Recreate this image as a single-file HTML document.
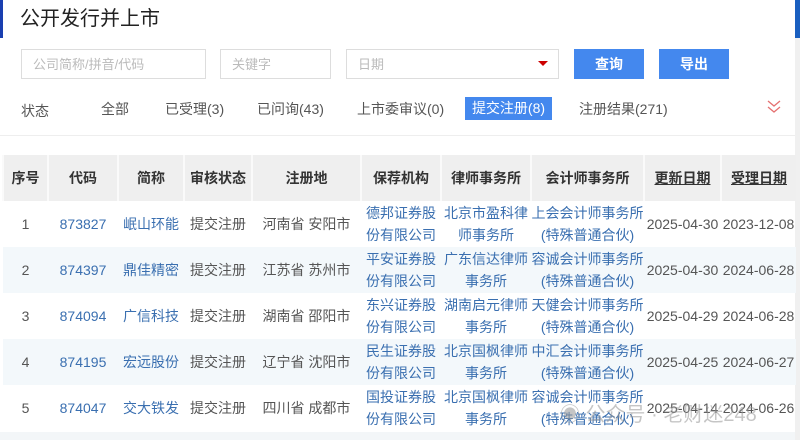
<!DOCTYPE html>
<html><head><meta charset="utf-8"><style>
*{margin:0;padding:0;box-sizing:border-box}
body{width:800px;height:440px;overflow:hidden;background:#fff;font-family:"Liberation Sans","Noto Sans CJK SC",sans-serif;color:#555;position:relative}
.abs{position:absolute}
.inp{position:absolute;top:49px;height:30px;border:1px solid #ddd;font-size:13px;color:#bbb;padding:7px 0 0 11px;line-height:15px}
.btn{position:absolute;top:49px;height:30px;width:70px;background:#4488ee;color:#fff;font-weight:bold;font-size:14px;text-align:center;line-height:30px}
.st{position:absolute;top:100px;font-size:14px;color:#555;line-height:18px}
table{position:absolute;left:2px;top:155px;border-collapse:collapse;table-layout:fixed;width:793px}
td,th{text-align:center;font-size:14px;line-height:22px;padding:0}
th{background:#efefef;height:46px;color:#333;border-left:2px solid #fafafa}
td{height:46px}
tr.a td{background:#f3f8fb}
.l{color:#3a6fb0}
</style></head><body>
<div class="abs" style="left:0;top:0;width:3px;height:38px;background:#1a3fb0"></div>
<div class="abs" style="left:795px;top:0;width:5px;height:38px;background:#1a5fc0"></div>
<div class="abs" style="left:795px;top:38px;width:5px;height:402px;background:#f0f0f0"></div>
<div class="abs" style="left:20px;top:5px;font-size:20px;color:#222;line-height:28px">公开发行并上市</div>
<div class="inp" style="left:21px;width:185px">公司简称/拼音/代码</div>
<div class="inp" style="left:220px;width:111px">关键字</div>
<div class="inp" style="left:346px;width:213px">日期</div>
<div class="abs" style="left:538px;top:61px;width:0;height:0;border-left:5px solid transparent;border-right:5px solid transparent;border-top:5px solid #c00"></div>
<div class="btn" style="left:574px">查询</div>
<div class="btn" style="left:659px">导出</div>
<div class="st" style="left:21px;top:102px">状态</div>
<div class="st" style="left:101px">全部</div>
<div class="st" style="left:165px">已受理(3)</div>
<div class="st" style="left:257px">已问询(43)</div>
<div class="st" style="left:357px">上市委审议(0)</div>
<div class="abs" style="left:465px;top:97px;width:87px;height:23px;background:#4488ee;color:#fff;font-size:14px;text-align:center;line-height:23px">提交注册(8)</div>
<div class="st" style="left:579px">注册结果(271)</div>
<svg class="abs" style="left:766px;top:99px" width="16" height="16"><path d="M2 2l6 5l6-5M2 8l6 5l6-5" fill="none" stroke="#e57070" stroke-width="1.3"/></svg>
<div class="abs" style="left:0;top:135px;width:795px;height:1px;background:#eee"></div>
<table>
<colgroup><col style="width:45px"><col style="width:70px"><col style="width:66px"><col style="width:68px"><col style="width:109px"><col style="width:80px"><col style="width:90px"><col style="width:113px"><col style="width:77px"><col style="width:75px"></colgroup>
<tr><th>序号</th><th>代码</th><th>简称</th><th>审核状态</th><th>注册地</th><th>保荐机构</th><th>律师事务所</th><th>会计师事务所</th><th><u>更新日期</u></th><th><u>受理日期</u></th></tr>
<tr><td>1</td><td class="l">873827</td><td class="l">岷山环能</td><td>提交注册</td><td>河南省 安阳市</td><td class="l">德邦证券股<br>份有限公司</td><td class="l">北京市盈科律<br>师事务所</td><td class="l">上会会计师事务所<br>(特殊普通合伙)</td><td>2025-04-30</td><td>2023-12-08</td></tr>
<tr class="a"><td>2</td><td class="l">874397</td><td class="l">鼎佳精密</td><td>提交注册</td><td>江苏省 苏州市</td><td class="l">平安证券股<br>份有限公司</td><td class="l">广东信达律师<br>事务所</td><td class="l">容诚会计师事务所<br>(特殊普通合伙)</td><td>2025-04-30</td><td>2024-06-28</td></tr>
<tr><td>3</td><td class="l">874094</td><td class="l">广信科技</td><td>提交注册</td><td>湖南省 邵阳市</td><td class="l">东兴证券股<br>份有限公司</td><td class="l">湖南启元律师<br>事务所</td><td class="l">天健会计师事务所<br>(特殊普通合伙)</td><td>2025-04-29</td><td>2024-06-28</td></tr>
<tr class="a"><td>4</td><td class="l">874195</td><td class="l">宏远股份</td><td>提交注册</td><td>辽宁省 沈阳市</td><td class="l">民生证券股<br>份有限公司</td><td class="l">北京国枫律师<br>事务所</td><td class="l">中汇会计师事务所<br>(特殊普通合伙)</td><td>2025-04-25</td><td>2024-06-27</td></tr>
<tr><td>5</td><td class="l">874047</td><td class="l">交大铁发</td><td>提交注册</td><td>四川省 成都市</td><td class="l">国投证券股<br>份有限公司</td><td class="l">北京国枫律师<br>事务所</td><td class="l">容诚会计师事务所<br>(特殊普通合伙)</td><td>2025-04-14</td><td>2024-06-26</td></tr>
</table>
<div class="abs" style="left:0;top:432px;width:795px;height:8px;background:#f3f6f8"></div>
<div class="abs" style="left:560px;top:398px;font-size:20px;color:rgba(150,150,150,0.55)">◉ 公众号 · 老财迷248</div>
</body></html>
